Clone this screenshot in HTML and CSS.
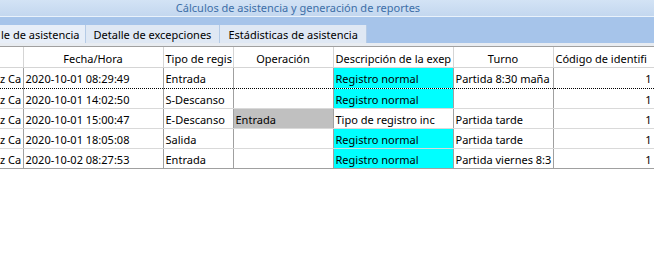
FILE: index.html
```html
<!DOCTYPE html>
<html lang="es">
<head>
    <meta charset="UTF-8">
    <title>Cálculos de asistencia y generación de reportes</title>
    <link rel="stylesheet" href="styles.css">
</head>
<body>
    <div class="window">
        <div class="titlebar">Cálculos de asistencia y generación de reportes</div>
        <div class="tabstrip">
            <div class="tab active">le de asistencia</div>
            <div class="tab">Detalle de excepciones</div>
            <div class="tab">Estádisticas de asistencia</div>
        </div>
        <div class="grid">
            <table>
                <colgroup>
                    <col class="c-name">
                    <col class="c-date">
                    <col class="c-type">
                    <col class="c-op">
                    <col class="c-desc">
                    <col class="c-shift">
                    <col class="c-code">
                </colgroup>
                <thead>
                    <tr>
                        <th></th>
                        <th class="center">Fecha/Hora</th>
                        <th>Tipo de regis</th>
                        <th class="center">Operación</th>
                        <th>Descripción de la exep</th>
                        <th class="center">Turno</th>
                        <th>Código de identifi</th>
                    </tr>
                </thead>
                <tbody>
                    <tr class="focused">
                        <td>z Ca</td>
                        <td>2020-10-01 08:29:49</td>
                        <td>Entrada</td>
                        <td></td>
                        <td class="normal">Registro normal</td>
                        <td>Partida 8:30 maña</td>
                        <td class="num">1</td>
                    </tr>
                    <tr>
                        <td>z Ca</td>
                        <td>2020-10-01 14:02:50</td>
                        <td>S-Descanso</td>
                        <td></td>
                        <td class="normal">Registro normal</td>
                        <td></td>
                        <td class="num">1</td>
                    </tr>
                    <tr>
                        <td>z Ca</td>
                        <td>2020-10-01 15:00:47</td>
                        <td>E-Descanso</td>
                        <td class="changed">Entrada</td>
                        <td>Tipo de registro inc</td>
                        <td>Partida tarde</td>
                        <td class="num">1</td>
                    </tr>
                    <tr>
                        <td>z Ca</td>
                        <td>2020-10-01 18:05:08</td>
                        <td>Salida</td>
                        <td></td>
                        <td class="normal">Registro normal</td>
                        <td>Partida tarde</td>
                        <td class="num">1</td>
                    </tr>
                    <tr>
                        <td>z Ca</td>
                        <td>2020-10-02 08:27:53</td>
                        <td>Entrada</td>
                        <td></td>
                        <td class="normal">Registro normal</td>
                        <td>Partida viernes 8:3</td>
                        <td class="num">1</td>
                    </tr>
                </tbody>
            </table>
        </div>
    </div>
</body>
</html>
```

FILE: styles.css
```css
body {
    margin: 0;
    background-color: #ffffff;
    font-family: "Noto Sans", "Open Sans", sans-serif;
    font-size: 11px;
    color: #000;
}
.window {
    width: 654px;
}
.titlebar {
    height: 16px;
    line-height: 16px;
    text-align: center;
    color: #3d6fa8;
    background: linear-gradient(#d3e3f5, #c3d7ef);
    border-bottom: 1px solid #e9f2fb;
    padding-right: 58px;
}
.tabstrip {
    display: flex;
    align-items: flex-end;
    height: 26px;
    background-color: #a6c4ea;
    border-bottom: 3px solid #e8ecf1;
}
.tab {
    height: 18px;
    line-height: 19px;
    padding: 0 8px;
    background-color: #dfe8f4;
    border-right: 1px solid #b5cbe6;
    white-space: nowrap;
}
.tab.active {
    background-color: #e7eef8;
    padding: 0 5px 0 1px;
}
.grid {
    border-top: 1px solid #a0a0a0;
    overflow: hidden;
}
table {
    border-collapse: collapse;
    table-layout: fixed;
    width: 654px;
}
.c-name { width: 23px; }
.c-date { width: 140px; }
.c-type { width: 70px; }
.c-op { width: 100px; }
.c-desc { width: 120px; }
.c-shift { width: 100px; }
.c-code { width: 101px; }
th, td {
    white-space: nowrap;
    overflow: hidden;
    text-overflow: clip;
    padding: 0 2px;
    text-align: left;
}
th {
    height: 18px;
    padding-top: 2px;
    font-weight: normal;
    background-color: #ffffff;
    border-right: 1px solid #d5d5d5;
    border-bottom: 1px solid #d5d5d5;
}
th.center {
    text-align: center;
}
td {
    height: 18px;
    padding-top: 1px;
    border-right: 1px solid #a0a0a0;
    border-bottom: 1px solid #d9d9d9;
}
td:first-child {
    padding-left: 0;
}
td.num {
    text-align: right;
}
td.normal {
    background-color: #00ffff;
}
td.changed {
    background-color: #c0c0c0;
}
tr.focused td {
    height: 19px;
    border-top: 1px dotted #000;
    border-bottom: 1px dotted #000;
}
tbody tr:last-child td {
    border-bottom: 1px solid #a0a0a0;
}
```
